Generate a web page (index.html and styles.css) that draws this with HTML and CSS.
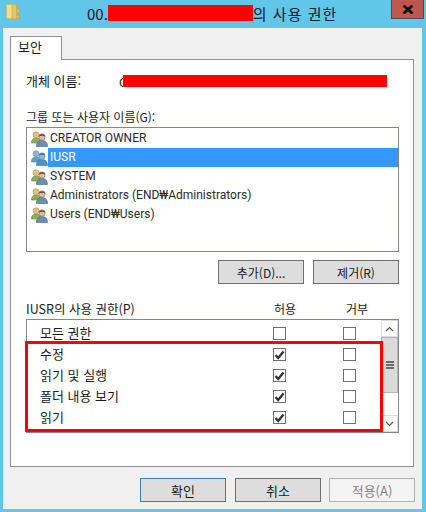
FILE: index.html
```html
<!DOCTYPE html>
<html lang="ko">
<head>
    <meta charset="UTF-8">
    <title>사용 권한</title>
    <link rel="stylesheet" href="styles.css">
</head>
<body>
    <div class="window">
        <!-- Title bar -->
        <div class="titlebar">
            <svg class="folder-icon" width="14" height="16" viewBox="0 0 14 16">
                <path d="M7 1 H11 V5 H13.5 V14 H7 Z" fill="#e8b94f" stroke="#c99a3a" stroke-width="0.6"/>
                <path d="M0.5 0.5 H10 V14.5 H0.5 Z" fill="#f3dc8a" stroke="#cdb25a" stroke-width="0.6"/>
                <path d="M6 1.5 L10.5 0.5 V15.5 L6 14 Z" fill="#e3c96c" stroke="#b9a04e" stroke-width="0.5"/>
                <path d="M11.5 8 H12.5 V12 H11.5 Z" fill="#6aa9d8"/>
            </svg>
            <div class="title"><span>00.</span><span class="redact title-redact"></span><span class="title-end">의 사용 권한</span></div>
            <div class="close">
                <svg width="12" height="9" viewBox="0 0 12 9"><path d="M1.5 0.5 L10.5 8.5 M10.5 0.5 L1.5 8.5" stroke="#111" stroke-width="2.8"/></svg>
            </div>
        </div>

        <div class="client">
            <div class="tab">보안</div>
            <div class="panel">
                <div class="object-row">
                    <span class="object-label">개체 이름:</span>
                    <span class="object-value">C</span>
                    <span class="redact object-redact"></span>
                </div>

                <div class="group-label">그룹 또는 사용자 이름(G):</div>
                <div class="user-list">
                    <div class="user-row"><svg class="user-icon"><use href="#users"/></svg><span class="user-name">CREATOR OWNER</span></div>
                    <div class="user-row selected"><svg class="user-icon"><use href="#users-selected"/></svg><span class="user-name">IUSR</span></div>
                    <div class="user-row"><svg class="user-icon"><use href="#users"/></svg><span class="user-name">SYSTEM</span></div>
                    <div class="user-row"><svg class="user-icon"><use href="#users"/></svg><span class="user-name">Administrators (END₩Administrators)</span></div>
                    <div class="user-row"><svg class="user-icon"><use href="#users"/></svg><span class="user-name">Users (END₩Users)</span></div>
                </div>

                <div class="list-buttons">
                    <div class="btn">추가(D)...</div>
                    <div class="btn">제거(R)</div>
                </div>

                <div class="perm-header">
                    <span class="perm-title">IUSR의 사용 권한(P)</span>
                    <span class="perm-col">허용</span>
                    <span class="perm-col">거부</span>
                </div>
                <div class="perm-list">
                    <div class="perm-rows">
                        <div class="perm-row"><span class="perm-name">모든 권한</span><span class="check"></span><span class="check"></span></div>
                        <div class="perm-row"><span class="perm-name">수정</span><span class="check"><svg width="11" height="10"><use href="#tick"/></svg></span><span class="check"></span></div>
                        <div class="perm-row"><span class="perm-name">읽기 및 실행</span><span class="check"><svg width="11" height="10"><use href="#tick"/></svg></span><span class="check"></span></div>
                        <div class="perm-row"><span class="perm-name">폴더 내용 보기</span><span class="check"><svg width="11" height="10"><use href="#tick"/></svg></span><span class="check"></span></div>
                        <div class="perm-row"><span class="perm-name">읽기</span><span class="check"><svg width="11" height="10"><use href="#tick"/></svg></span><span class="check"></span></div>
                    </div>
                    <div class="scrollbar">
                        <div class="arrow"><svg width="9" height="6"><path d="M1 5 L4.5 1.5 L8 5" fill="none" stroke="#555" stroke-width="1.2"/></svg></div>
                        <div class="thumb"><span></span><span></span><span></span></div>
                        <div class="track"></div>
                        <div class="arrow"><svg width="9" height="6"><path d="M1 1 L4.5 4.5 L8 1" fill="none" stroke="#555" stroke-width="1.2"/></svg></div>
                    </div>
                    <!-- annotation drawn over the list -->
                    <div class="highlight"></div>
                </div>
            </div>

            <div class="dialog-buttons">
                <div class="btn default">확인</div>
                <div class="btn">취소</div>
                <div class="btn disabled">적용(A)</div>
            </div>
        </div>
    </div>

    <svg class="defs" width="0" height="0">
        <symbol id="users" viewBox="0 0 17 16">
            <path d="M0.5 12 C0.5 8 2.5 7 5 7 C7.5 7 9.5 8 9.5 12 Z" fill="#8fae5c" stroke="#66823f" stroke-width="0.6"/>
            <circle cx="5" cy="3.8" r="3" fill="#e3c27f" stroke="#a08a4c" stroke-width="0.6"/>
            <path d="M5.5 15.5 C5.5 11 8 9.5 11 9.5 C14 9.5 16.5 11 16.5 15.5 Z" fill="#6c8fb0" stroke="#45647f" stroke-width="0.6"/>
            <circle cx="11" cy="6" r="3.2" fill="#e6bd98" stroke="#8a6a50" stroke-width="0.6"/>
            <path d="M8 5.5 C8 2.5 14 2.5 14 5.5 C12 4.5 10 4.5 8 5.5 Z" fill="#4e4a44"/>
        </symbol>
        <symbol id="users-selected" viewBox="0 0 17 16">
            <path d="M0.5 12 C0.5 8 2.5 7 5 7 C7.5 7 9.5 8 9.5 12 Z" fill="#5f9fb0" stroke="#4a86a0" stroke-width="0.6"/>
            <circle cx="5" cy="3.8" r="3" fill="#8fb5cf" stroke="#6a94b4" stroke-width="0.6"/>
            <path d="M5.5 15.5 C5.5 11 8 9.5 11 9.5 C14 9.5 16.5 11 16.5 15.5 Z" fill="#4f8fcc" stroke="#3a78b4" stroke-width="0.6"/>
            <circle cx="11" cy="6" r="3.2" fill="#96b4d0" stroke="#5f88ac" stroke-width="0.6"/>
            <path d="M8 5.5 C8 2.5 14 2.5 14 5.5 C12 4.5 10 4.5 8 5.5 Z" fill="#3f6a94"/>
        </symbol>
        <symbol id="tick" viewBox="0 0 11 10">
            <path d="M1.5 5 L4.2 8 L9.5 1.5" fill="none" stroke="#333" stroke-width="2.4"/>
        </symbol>
    </svg>
</body>
</html>
```

FILE: styles.css
```css
html, body {
    margin: 0;
    padding: 0;
}

body {
    width: 426px;
    height: 512px;
    overflow: hidden;
    font-family: "Noto Sans CJK KR", "Liberation Sans", sans-serif;
    font-size: 12px;
    color: #1a1a1a;
}

.window {
    width: 426px;
    height: 512px;
    box-sizing: border-box;
    padding: 0 4px 3px 3px;
    background-color: #62c6e9;
    display: flex;
    flex-direction: column;
}

.defs {
    position: absolute;
}

.redact {
    display: inline-block;
    background-color: #ff0000;
}

/* Title bar */
.titlebar {
    height: 28px;
    flex: none;
    display: flex;
    align-items: flex-start;
}

.folder-icon {
    margin: 4px 0 0 3px;
    flex: none;
}

.title {
    margin: 3px 0 0 67px;
    width: 290px;
    height: 20px;
    display: flex;
    align-items: center;
    font-size: 15px;
    color: #10202c;
}

.title-end {
    letter-spacing: 1px;
}

.title-redact {
    width: 145px;
    height: 16px;
}

.close {
    margin-left: auto;
    margin-right: -2px;
    width: 33px;
    height: 19px;
    box-sizing: border-box;
    background-color: #c0574f;
    border: 1px solid #4b4b4b;
    border-top: none;
    display: flex;
    align-items: center;
    justify-content: center;
}

/* Dialog body */
.client {
    flex: 1;
    background-color: #f0f0f0;
    padding: 8px 0 0 7px;
    display: flex;
    flex-direction: column;
}

.tab {
    width: 52px;
    height: 24px;
    box-sizing: border-box;
    background-color: #fff;
    border: 1px solid #8e8f97;
    border-bottom: none;
    padding-left: 7px;
    line-height: 20px;
    font-size: 13px;
    margin-bottom: -1px;
    position: relative;
    z-index: 1;
}

.panel {
    width: 404px;
    height: 408px;
    box-sizing: border-box;
    background-color: #fff;
    border: 1px solid #8e8f97;
    padding: 14px 15px 0;
}

.object-row {
    height: 14px;
    display: flex;
    align-items: center;
}

.object-label {
    width: 93px;
    flex: none;
    font-size: 13px;
    margin-top: -2px;
}

.object-value {
    width: 4px;
    flex: none;
}

.object-redact {
    width: 264px;
    height: 12px;
}

.group-label {
    margin-top: 21px;
    height: 15px;
    line-height: 15px;
}

/* User list */
.user-list {
    margin-top: 3px;
    width: 373px;
    height: 125px;
    box-sizing: border-box;
    border: 1px solid #828790;
    padding-top: 1px;
}

.user-row {
    height: 19px;
    display: flex;
    align-items: center;
    padding-left: 4px;
}

.user-icon {
    width: 17px;
    height: 16px;
    flex: none;
}

.user-name {
    flex: 1;
    height: 19px;
    line-height: 18px;
    padding-left: 2px;
    font-family: Roboto, "Liberation Sans", "Noto Sans CJK KR", sans-serif;
    color: #2a2a2a;
}

.user-row.selected .user-name {
    background-color: #3399ff;
    color: #fff;
}

.list-buttons {
    margin-top: 8px;
    width: 373px;
    display: flex;
    justify-content: flex-end;
    gap: 9px;
}

.btn {
    width: 86px;
    height: 24px;
    box-sizing: border-box;
    border: 1px solid #707070;
    background-color: #dddddd;
    display: flex;
    align-items: center;
    justify-content: center;
    font-size: 12px;
}

.btn.default {
    border-color: #3c7fb1;
    margin-right: 1px;
}

.btn.disabled {
    border-color: #adb2b5;
    background-color: #f4f4f4;
    color: #838383;
}

/* Permissions */
.perm-header {
    margin-top: 17px;
    width: 373px;
    height: 15px;
    line-height: 15px;
    display: flex;
}

.perm-title {
    width: 223px;
    flex: none;
    font-size: 12.5px;
}

.perm-col {
    width: 72px;
    flex: none;
    text-align: center;
}

.perm-list {
    position: relative;
    margin-top: 3px;
    width: 373px;
    height: 114px;
    box-sizing: border-box;
    border: 1px solid #828790;
    display: flex;
}

.perm-rows {
    flex: 1;
    padding-top: 3px;
}

.perm-row {
    height: 21px;
    display: flex;
    align-items: center;
    padding-left: 13px;
}

.perm-name {
    width: 233px;
    flex: none;
    font-size: 13px;
    line-height: 19px;
    margin-top: -2px;
}

.check {
    width: 13px;
    height: 13px;
    box-sizing: border-box;
    border: 1px solid #707070;
    background-color: #fff;
    margin-right: 57px;
    flex: none;
    display: flex;
    align-items: center;
    justify-content: center;
}

.check:last-child {
    margin-right: 0;
}

.scrollbar {
    width: 17px;
    flex: none;
    display: flex;
    flex-direction: column;
    background-color: #fff;
}

.arrow {
    height: 17px;
    box-sizing: border-box;
    border: 1px solid #dcdcdc;
    display: flex;
    align-items: center;
    justify-content: center;
}

.thumb {
    height: 56px;
    box-sizing: border-box;
    background-color: #dadada;
    border: 1px solid #b5b5b5;
    display: flex;
    flex-direction: column;
    align-items: center;
    justify-content: center;
    gap: 1px;
}

.thumb span {
    width: 8px;
    height: 2px;
    background-color: #6a6a6a;
}

.track {
    flex: 1;
}

.highlight {
    position: absolute;
    left: -2px;
    top: 21px;
    width: 358px;
    height: 91px;
    box-sizing: border-box;
    border: 3px solid #ff0000;
}

.dialog-buttons {
    margin-top: 11px;
    padding-right: 7px;
    display: flex;
    justify-content: flex-end;
    gap: 8px;
}

.dialog-buttons .btn {
    font-size: 13px;
}
```
